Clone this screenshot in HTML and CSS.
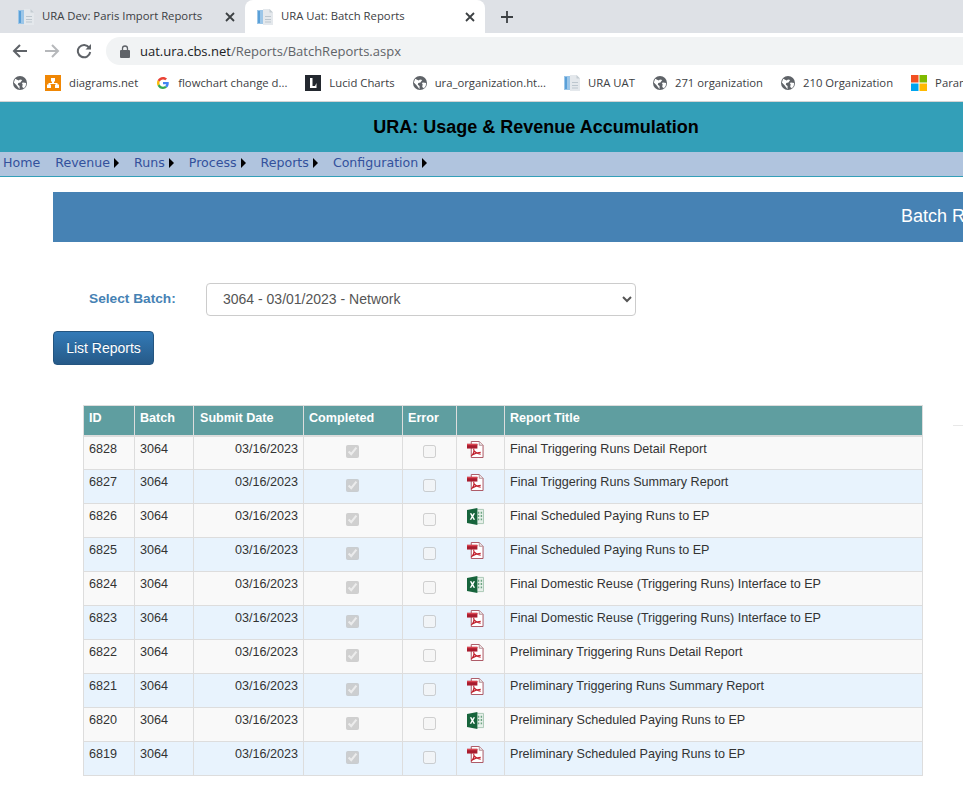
FILE: index.html
```html
<!DOCTYPE html>
<html lang="en">
<head>
<meta charset="utf-8">
<title>URA Uat: Batch Reports</title>
<link rel="stylesheet" href="styles.css">
</head>
<body>
<svg class="defs" aria-hidden="true">
  <symbol id="doc" viewBox="0 0 16 16">
    <path d="M0 1h7v14H0z" fill="#9cc6e8"/>
    <path d="M6 0h6.500L16 3.500V16H6z" fill="#e4e8ec"/>
    <path d="M12.500 0v3.500H16z" fill="#c4ccd2"/>
    <path d="M8 7h6v1H8zM8 10h6v1H8zM8 12.500h6v1H8z" fill="#bcc6ce"/>
    <path d="M1 2h2v12H1z" fill="#5aa0d8"/>
  </symbol>
  <symbol id="globe" viewBox="0 0 16 16">
    <circle cx="8" cy="8" r="8" fill="#5f6368"/>
    <path d="M2.500 3l4 2 1.500-1 2.500.5L8.500 7.500 6 8l-.5 2 2 1.500V15L4 10.500 1 7.500zM11.500 7.500l3.500.5-.5 3.500-2 2.500-2-1.500.5-3-1-1.500z" fill="#fff"/>
  </symbol>
  <symbol id="pdf" viewBox="0 0 18 18">
    <path d="M4.500 .5h8.500l4 4v13H4.500z" fill="#fff" stroke="#a8505c"/>
    <path d="M13 .5v4h4" fill="#e8e8e8" stroke="#b58a90"/>
    <path d="M0 3h11v5H0z" fill="#a81c2e"/>
    <path d="M0 3h11v1.500H0z" fill="#d9434f"/>
    <path d="M7 8c1 3 .5 5-2.500 8M7.500 10.500c1.500 2 3.500 3 7 3.500M5 15c3-2 5.500-3 9.500-3" fill="none" stroke="#c01f2c" stroke-width="1.200"/>
  </symbol>
  <symbol id="xls" viewBox="0 0 18 18">
    <path d="M9 1.500h8.500v15H9z" fill="#e6efe9" stroke="#a9c7b5"/>
    <path d="M11.500 4h1.500v2h-1.500zM14.500 4H16v2h-1.500zM11.500 7.500h1.500v2h-1.500zM14.500 7.500H16v2h-1.500zM11.500 11h1.500v2h-1.500zM14.500 11H16v2h-1.500z" fill="#6da583"/>
    <path d="M0 2l11-2v18L0 16z" fill="#17643c"/>
    <path d="M3 5.500h1.800l1 2 1-2h1.700L6.700 9l1.900 3.500H6.800l-1.100-2.200-1.100 2.200H2.900L4.800 9z" fill="#fff"/>
  </symbol>
  <symbol id="close" viewBox="0 0 10 10">
    <path d="M1 1l8 8M9 1l-8 8" stroke="#3c4043" stroke-width="1.800" fill="none"/>
  </symbol>
  <symbol id="caret" viewBox="0 0 5 10">
    <path d="M0 0l5 5-5 5z" fill="#000"/>
  </symbol>
</svg>

<div class="page">
  <div class="tabstrip">
    <div class="tab">
      <svg class="ico16"><use href="#doc"/></svg>
      <span class="tab-title">URA Dev: Paris Import Reports</span>
      <svg class="tab-close"><use href="#close"/></svg>
    </div>
    <div class="tab tab-active">
      <svg class="ico16"><use href="#doc"/></svg>
      <span class="tab-title">URA Uat: Batch Reports</span>
      <svg class="tab-close"><use href="#close"/></svg>
    </div>
    <svg class="new-tab" viewBox="0 0 12 12"><path d="M6 0v12M0 6h12" stroke="#3c4043" stroke-width="1.800" fill="none"/></svg>
  </div>

  <div class="toolbar">
    <svg class="nav-ico" viewBox="0 0 16 16"><path d="M15 8H2M8 2L2 8l6 6" fill="none" stroke="#5f6368" stroke-width="2"/></svg>
    <svg class="nav-ico" viewBox="0 0 16 16"><path d="M1 8h13M8 2l6 6-6 6" fill="none" stroke="#b6b8bb" stroke-width="2"/></svg>
    <svg class="nav-ico" viewBox="0 0 16 16"><path d="M13.200 4.600A6.200 6.200 0 1 0 14.200 9" fill="none" stroke="#5f6368" stroke-width="2"/><path d="M15 1v5.500H9.500z" fill="#5f6368"/></svg>
    <div class="omnibox">
      <svg class="lock" viewBox="0 0 10 13"><path d="M2.500 5V3.500a2.500 2.500 0 0 1 5 0V5" fill="none" stroke="#5f6368" stroke-width="1.300"/><rect y="5" width="10" height="8" rx="1" fill="#5f6368"/></svg>
      <span class="url"><span class="url-host">uat.ura.cbs.net</span>/Reports/BatchReports.aspx</span>
    </div>
  </div>

  <div class="bookmarks">
    <span class="bm"><svg class="ico14"><use href="#globe"/></svg></span>
    <span class="bm">
      <svg class="ico16" viewBox="0 0 16 16"><rect width="16" height="16" fill="#f08705"/><path d="M6 3h4v3.500H9v1.500h3.500v1.500H14V13h-4V9.500h1V9H5v.5h1V13H2V9.500h1.500V8H7V6.500H6z" fill="#fff"/></svg>
      <span>diagrams.net</span>
    </span>
    <span class="bm">
      <svg class="ico12" viewBox="0 0 48 48"><path fill="#ea4335" d="M24 9.500c3.500 0 6.700 1.200 9.200 3.600l6.900-6.900C35.900 2.400 30.500 0 24 0 14.600 0 6.500 5.400 2.600 13.200l8 6.200C12.400 13.700 17.700 9.500 24 9.500z"/><path fill="#4285f4" d="M47 24.500c0-1.600-.1-3.100-.4-4.500H24v9h13c-.6 3-2.200 5.500-4.800 7.200l7.700 6C44.400 38 47 31.900 47 24.500z"/><path fill="#fbbc05" d="M10.500 28.600c-.5-1.400-.8-3-.8-4.600s.3-3.200.8-4.600l-8-6.200C.9 16.500 0 20.100 0 24s.9 7.500 2.600 10.800z"/><path fill="#34a853" d="M24 48c6.500 0 11.900-2.100 15.900-5.800l-7.700-6c-2.200 1.400-4.900 2.300-8.200 2.300-6.300 0-11.600-4.200-13.500-9.900l-8 6.200C6.500 42.600 14.600 48 24 48z"/></svg>
      <span>flowchart change d...</span>
    </span>
    <span class="bm">
      <svg class="ico16" viewBox="0 0 16 16"><rect width="16" height="16" fill="#23282f"/><path d="M5 3h2.500v8H10l1.500-3v5H5z" fill="#fff"/></svg>
      <span>Lucid Charts</span>
    </span>
    <span class="bm"><svg class="ico14"><use href="#globe"/></svg><span>ura_organization.ht...</span></span>
    <span class="bm"><svg class="ico16"><use href="#doc"/></svg><span>URA UAT</span></span>
    <span class="bm"><svg class="ico14"><use href="#globe"/></svg><span>271 organization</span></span>
    <span class="bm"><svg class="ico14"><use href="#globe"/></svg><span>210 Organization</span></span>
    <span class="bm">
      <svg class="ico16" viewBox="0 0 16 16"><path d="M0 0h7.500v7.500H0z" fill="#f25022"/><path d="M8.500 0H16v7.500H8.500z" fill="#7fba00"/><path d="M0 8.500h7.500V16H0z" fill="#00a4ef"/><path d="M8.500 8.500H16V16H8.500z" fill="#ffb900"/></svg>
      <span>Parameters</span>
    </span>
  </div>

  <header class="app-header"><h1>URA: Usage &amp; Revenue Accumulation</h1></header>

  <nav class="menu">
    <a class="menu-item">Home</a>
    <a class="menu-item">Revenue<svg class="caret"><use href="#caret"/></svg></a>
    <a class="menu-item">Runs<svg class="caret"><use href="#caret"/></svg></a>
    <a class="menu-item">Process<svg class="caret"><use href="#caret"/></svg></a>
    <a class="menu-item">Reports<svg class="caret"><use href="#caret"/></svg></a>
    <a class="menu-item">Configuration<svg class="caret"><use href="#caret"/></svg></a>
  </nav>

  <main class="content">
    <div class="title-bar">Batch Reports</div>

    <div class="batch-row">
      <label class="batch-label" for="batch">Select Batch:</label>
      <select class="batch-select" id="batch">
        <option>3064 - 03/01/2023 - Network</option>
      </select>
    </div>

    <button class="btn-list" type="button">List Reports</button>

    <table class="grid">
      <colgroup>
        <col class="c-id"><col class="c-batch"><col class="c-date"><col class="c-done"><col class="c-err"><col class="c-ico"><col class="c-title">
      </colgroup>
      <thead>
        <tr><th>ID</th><th>Batch</th><th class="th-date">Submit Date</th><th>Completed</th><th>Error</th><th></th><th>Report Title</th></tr>
      </thead>
      <tbody>
        <tr><td>6828</td><td>3064</td><td class="num">03/16/2023</td><td class="chk"><input type="checkbox" checked disabled></td><td class="chk"><input type="checkbox" disabled></td><td class="file"><svg class="ico17"><use href="#pdf"/></svg></td><td>Final Triggering Runs Detail Report</td></tr>
        <tr><td>6827</td><td>3064</td><td class="num">03/16/2023</td><td class="chk"><input type="checkbox" checked disabled></td><td class="chk"><input type="checkbox" disabled></td><td class="file"><svg class="ico17"><use href="#pdf"/></svg></td><td>Final Triggering Runs Summary Report</td></tr>
        <tr><td>6826</td><td>3064</td><td class="num">03/16/2023</td><td class="chk"><input type="checkbox" checked disabled></td><td class="chk"><input type="checkbox" disabled></td><td class="file"><svg class="ico17"><use href="#xls"/></svg></td><td>Final Scheduled Paying Runs to EP</td></tr>
        <tr><td>6825</td><td>3064</td><td class="num">03/16/2023</td><td class="chk"><input type="checkbox" checked disabled></td><td class="chk"><input type="checkbox" disabled></td><td class="file"><svg class="ico17"><use href="#pdf"/></svg></td><td>Final Scheduled Paying Runs to EP</td></tr>
        <tr><td>6824</td><td>3064</td><td class="num">03/16/2023</td><td class="chk"><input type="checkbox" checked disabled></td><td class="chk"><input type="checkbox" disabled></td><td class="file"><svg class="ico17"><use href="#xls"/></svg></td><td>Final Domestic Reuse (Triggering Runs) Interface to EP</td></tr>
        <tr><td>6823</td><td>3064</td><td class="num">03/16/2023</td><td class="chk"><input type="checkbox" checked disabled></td><td class="chk"><input type="checkbox" disabled></td><td class="file"><svg class="ico17"><use href="#pdf"/></svg></td><td>Final Domestic Reuse (Triggering Runs) Interface to EP</td></tr>
        <tr><td>6822</td><td>3064</td><td class="num">03/16/2023</td><td class="chk"><input type="checkbox" checked disabled></td><td class="chk"><input type="checkbox" disabled></td><td class="file"><svg class="ico17"><use href="#pdf"/></svg></td><td>Preliminary Triggering Runs Detail Report</td></tr>
        <tr><td>6821</td><td>3064</td><td class="num">03/16/2023</td><td class="chk"><input type="checkbox" checked disabled></td><td class="chk"><input type="checkbox" disabled></td><td class="file"><svg class="ico17"><use href="#pdf"/></svg></td><td>Preliminary Triggering Runs Summary Report</td></tr>
        <tr><td>6820</td><td>3064</td><td class="num">03/16/2023</td><td class="chk"><input type="checkbox" checked disabled></td><td class="chk"><input type="checkbox" disabled></td><td class="file"><svg class="ico17"><use href="#xls"/></svg></td><td>Preliminary Scheduled Paying Runs to EP</td></tr>
        <tr><td>6819</td><td>3064</td><td class="num">03/16/2023</td><td class="chk"><input type="checkbox" checked disabled></td><td class="chk"><input type="checkbox" disabled></td><td class="file"><svg class="ico17"><use href="#pdf"/></svg></td><td>Preliminary Scheduled Paying Runs to EP</td></tr>
      </tbody>
    </table>
    <div class="stray-rule"></div>
  </main>
</div>
</body>
</html>
```

FILE: styles.css
```css
html, body {
  margin: 0;
  padding: 0;
  background: #fff;
  overflow: hidden;
}
.defs { position: absolute; width: 0; height: 0; }
.page {
  width: 963px;
  height: 792px;
  overflow: hidden;
  position: relative;
  font-family: "Liberation Sans", Arial, sans-serif;
}
.ico12 { width: 12px; height: 12px; flex: none; margin: 0 1px; }
.ico14 { width: 14px; height: 14px; flex: none; }
.ico16 { width: 16px; height: 16px; flex: none; }
.ico17 { width: 17px; height: 17px; display: block; }

/* browser chrome */
.tabstrip {
  height: 33px;
  background: #dee1e6;
  display: flex;
  align-items: center;
  padding-left: 8px;
  box-sizing: border-box;
}
.tab {
  width: 237px;
  height: 33px;
  box-sizing: border-box;
  display: flex;
  align-items: center;
  padding: 0 10px;
  gap: 8px;
  font: 11.300px "Open Sans", "Noto Sans", sans-serif;
  color: #3c4043;
}
.tab-active {
  width: 240px;
  background: #fff;
  border-radius: 8px 8px 0 0;
  color: #3c4043;
  padding-left: 12px;
}
.tab-title { flex: 1; white-space: nowrap; margin-bottom: 2px; }
.tab-close { width: 10px; height: 10px; flex: none; }
.new-tab { width: 12px; height: 12px; margin-left: 16px; }
.toolbar {
  height: 32px;
  padding: 4px 0 0 12px;
  box-sizing: border-box;
  display: flex;
  align-items: flex-start;
  background: #fff;
}
.nav-ico { width: 16px; height: 16px; margin: 6px 16px 0 0; flex: none; }
.omnibox {
  flex: 1;
  height: 28px;
  margin-left: -2px;
  background: #f1f3f4;
  border-radius: 14px 0 0 14px;
  display: flex;
  align-items: center;
  padding-left: 14px;
  gap: 10px;
}
.lock { width: 10px; height: 13px; flex: none; }
.url { font: 13px "Open Sans", "Noto Sans", sans-serif; color: #5f6368; white-space: nowrap; }
.url-host { color: #202124; }
.bookmarks {
  height: 37px;
  padding-left: 13px;
  display: flex;
  align-items: center;
  gap: 18px;
  font: 11.300px "Open Sans", "Noto Sans", sans-serif;
  color: #3c4043;
  white-space: nowrap;
  box-sizing: border-box;
  border-bottom: 1px solid #d4d4d4;
}
.bm { display: inline-flex; align-items: center; gap: 8px; }
.bm > span { margin-bottom: 2px; }

/* app */
.app-header {
  height: 50px;
  width: 1072px;
  background: #339fb8;
  display: flex;
  align-items: center;
  justify-content: center;
}
.app-header h1 { margin: 0; font-size: 18px; font-weight: bold; color: #000; }
.menu {
  height: 25px;
  box-sizing: border-box;
  background: #b0c4de;
  border-bottom: 1px solid #339fb8;
  display: flex;
  align-items: center;
  padding: 0 0 3px 3px;
  gap: 15px;
  font: 12.600px "DejaVu Sans", Verdana, sans-serif;
  width: 1072px;
}
.menu-item { display: inline-flex; align-items: center; color: #33519c; }
.caret { width: 5px; height: 10px; margin-left: 4px; }

.content { padding-left: 53px; }
.title-bar {
  margin-top: 15px;
  width: 1810px;
  height: 50px;
  background: #4682b4;
  color: #fff;
  font-size: 18px;
  line-height: 49px;
  text-align: center;
}
.batch-row {
  margin-top: 41px;
  display: flex;
  align-items: center;
  padding-left: 36px;
}
.batch-label { width: 117px; margin-bottom: 2px; font-size: 13.700px; font-weight: bold; color: #4682b4; }
.batch-select {
  width: 430px;
  height: 33px;
  padding: 0 12px 2px;
  font: 14px "Liberation Sans", Arial, sans-serif;
  color: #555;
  background: #fff;
  border: 1px solid #ccc;
  border-radius: 4px;
}
.btn-list {
  display: block;
  margin-top: 15px;
  width: 101px;
  height: 34px;
  padding: 0;
  font: 14px "Liberation Sans", Arial, sans-serif;
  color: #fff;
  border: 1px solid #245580;
  border-radius: 4px;
  background: linear-gradient(#337ab7, #265a88);
  text-shadow: 0 -1px 0 rgba(0,0,0,.2);
}
.grid {
  margin: 40px 0 0 30px;
  width: 840px;
  table-layout: fixed;
  border-collapse: collapse;
  font-size: 12.600px;
  color: #333;
}
.c-id { width: 51px; } .c-batch { width: 59px; } .c-date { width: 110px; }
.c-done { width: 99px; } .c-err { width: 54px; } .c-ico { width: 48px; }
.grid th, .grid td { border: 1px solid #ddd; padding: 0 5px; text-align: left; }
.grid th {
  height: 30px;
  padding-bottom: 4px;
  box-sizing: border-box;
  background: #5f9ea0;
  color: #fff;
  font-weight: bold;
  font-size: 12.600px;
  border-bottom: 2px solid #ddd;
}
.grid th.th-date { padding-left: 6px; }
.grid td { height: 34px; vertical-align: top; padding-top: 5px; box-sizing: border-box; line-height: 15px; }
.grid tbody tr:nth-child(odd) td { background: #f9f9f9; }
.grid tbody tr:nth-child(even) td { background: #e8f3fd; }
.grid td.num { text-align: right; }
.grid td.chk { text-align: center; padding: 0; vertical-align: middle; }
.grid td.chk input { margin: 0 2px 2px 0; display: inline-block; vertical-align: middle; }
.grid td.chk + td.chk input { margin-right: 0; }
.grid td.file { padding: 4px 0 0 10px; }
.stray-rule {
  position: absolute;
  left: 953px;
  top: 425px;
  width: 10px;
  height: 1px;
  background: #e8e8e8;
}
```
